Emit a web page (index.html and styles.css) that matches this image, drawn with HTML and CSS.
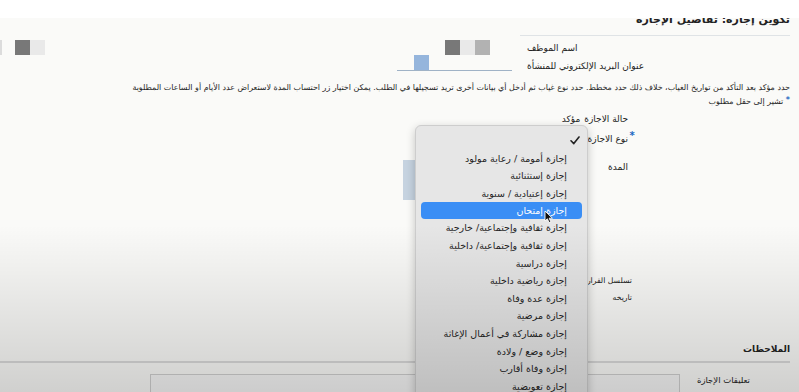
FILE: index.html
```html
<!DOCTYPE html>
<html lang="ar" dir="rtl">
<head>
    <meta charset="UTF-8">
    <meta name="viewport" content="width=device-width, initial-scale=1.0">
    <title>تكوين إجازة</title>
    <link rel="stylesheet" href="styles.css">
</head>
<body>
    <div class="header"></div>
    <div class="page">
        <div class="title-wrap">
            <h1 class="title">تكوين إجازة: تفاصيل الإجازة</h1>
        </div>
        <div class="title-rule"></div>

        <div class="info-row">
            <div class="info-labels">
                <div>اسم الموظف</div>
                <div>عنوان البريد الإلكتروني للمنشأة</div>
            </div>
            <div class="redact-mid">
                <div class="redact-top">
                    <span class="px dark"></span><span class="px light"></span><span class="px mid"></span>
                </div>
                <div class="redact-bottom">
                    <span class="px blue"></span>
                </div>
                <div class="redact-line"></div>
            </div>
            <div class="redact-left">
                <span class="px edge"></span><span class="gap"></span><span class="px dark"></span><span class="px light"></span>
            </div>
        </div>

        <p class="hint">حدد مؤكد بعد التأكد من تواريخ الغياب، خلاف ذلك حدد مخطط. حدد نوع غياب ثم أدخل أي بيانات أخرى تريد تسجيلها في الطلب. يمكن اختيار زر احتساب المدة لاستعراض عدد الأيام أو الساعات المطلوبة<br><span class="star">*</span> تشير إلى حقل مطلوب</p>

        <div class="form">
            <div class="row">
                <span class="req"></span>
                <span class="label">حالة الاجازة</span>
                <span class="value">مؤكد</span>
            </div>
            <div class="row">
                <span class="req">*</span>
                <span class="label">نوع الاجازة</span>
            </div>
            <div class="row row-duration">
                <span class="req"></span>
                <span class="label">المدة</span>
                <div class="field-stub"></div>
            </div>
            <div class="row row-short row-decision">
                <span class="req"></span>
                <span class="label">تسلسل القرار</span>
            </div>
            <div class="row row-short">
                <span class="req"></span>
                <span class="label">تاريخه</span>
            </div>
        </div>

        <h2 class="section">الملاحظات</h2>
        <div class="section-rule"></div>
        <div class="notes-row">
            <span class="notes-label">تعليقات الإجازة</span>
            <div class="textbox"></div>
        </div>
    </div>

    <div class="menu">
        <div class="menu-check">
            <svg width="10" height="9" viewBox="0 0 10 9"><path d="M1 4.8 L3.8 7.6 L9 1" fill="none" stroke="#222" stroke-width="1.6" stroke-linecap="round" stroke-linejoin="round"/></svg>
        </div>
        <div class="menu-item">إجازة أمومة / رعاية مولود</div>
        <div class="menu-item">إجازة إستثنائية</div>
        <div class="menu-item">إجازة إعتيادية / سنوية</div>
        <div class="menu-item active">إجازة إمتحان</div>
        <div class="menu-item">إجازة ثقافية وإجتماعية/ خارجية</div>
        <div class="menu-item">إجازة ثقافية وإجتماعية/ داخلية</div>
        <div class="menu-item">إجازة دراسية</div>
        <div class="menu-item">إجازة رياضية داخلية</div>
        <div class="menu-item">إجازة عدة وفاة</div>
        <div class="menu-item">إجازة مرضية</div>
        <div class="menu-item">إجازة مشاركة في أعمال الإغاثة</div>
        <div class="menu-item">إجازة وضع / ولادة</div>
        <div class="menu-item">إجازة وفاة أقارب</div>
        <div class="menu-item">إجازة تعويضية</div>
    </div>

    <svg class="cursor" width="10" height="14" viewBox="0 0 10 14">
        <path d="M1 1 L1 11 L3.4 8.8 L5 12.6 L6.8 11.8 L5.2 8.2 L8.4 8.2 Z" fill="#111" stroke="#fff" stroke-width="0.9" stroke-linejoin="round"/>
    </svg>

    <div class="shade"></div>
</body>
</html>
```

FILE: styles.css
```css
html, body {
    margin: 0;
    padding: 0;
}
body {
    width: 799px;
    height: 392px;
    overflow: hidden;
    position: relative;
    background: #fafaf8;
    font-family: "DejaVu Sans", sans-serif;
    color: #222;
    direction: rtl;
}
.header {
    height: 18px;
    background: #fff;
}
.page {
    padding-right: 9px;
}
.title-wrap {
    height: 11px;
    overflow: hidden;
}
.title {
    margin: -6px 0 0;
    font-size: 11px;
    line-height: 16px;
    font-weight: bold;
    color: #222;
}
.title-rule {
    width: 270px;
    height: 1px;
    margin-top: 6px;
    background: #dfe3e6;
}
.info-row {
    display: flex;
    gap: 8px;
    margin-top: 3px;
    height: 32px;
}
.info-labels {
    width: 270px;
    padding-left: 7px;
    box-sizing: border-box;
    text-align: left;
    font-size: 9px;
    line-height: 18px;
}
.redact-mid {
    width: 115px;
    direction: ltr;
}
.redact-top {
    padding-left: 48px;
    height: 15px;
    margin-top: 1px;
    display: flex;
}
.redact-bottom {
    padding-left: 17px;
    height: 15px;
    display: flex;
}
.redact-line {
    height: 1px;
    background: #9fb2c6;
}
.redact-left {
    margin-right: auto;
    direction: ltr;
    display: flex;
    height: 15px;
    margin-top: 1px;
}
.px {
    width: 15px;
    height: 15px;
    display: block;
}
.px.dark { background: #787878; }
.px.light { background: #e9e9e9; }
.px.mid { background: #b2b2b2; }
.px.blue { background: #95b5dc; }
.px.edge { width: 2px; background: #dcdcdc; }
.redact-left .gap { width: 13px; }
.hint {
    margin: 11px 0 0;
    font-size: 7.95px;
    line-height: 12px;
    color: #262626;
    white-space: nowrap;
}
.star {
    color: #1a66c2;
    font-weight: bold;
    vertical-align: 2px;
}
.form {
    padding-right: 154px;
    margin-top: 1px;
}
.row {
    display: flex;
    align-items: center;
    height: 20px;
    font-size: 9px;
}
.req {
    width: 8px;
    color: #1a66c2;
    font-weight: bold;
    font-size: 10px;
    align-self: flex-start;
    line-height: 14px;
    text-align: center;
}
.value {
    margin-right: 4px;
}
.row-duration {
    margin-top: 8px;
    height: 43px;
    align-items: flex-start;
    line-height: 20px;
}
.field-stub {
    width: 92px;
    height: 40px;
    margin-top: 3px;
    margin-right: 113px;
    background: #c6d3e0;
}
.row-short {
    height: 17px;
    font-size: 7.7px;
}
.row-short .req {
    width: 4px;
}
.row-decision {
    margin-top: 72px;
}
.section {
    margin: 35px 0 0;
    font-size: 9px;
    line-height: 16px;
    font-weight: bold;
    color: #222;
}
.section-rule {
    height: 2px;
    margin-top: 4px;
    background: #dadada;
}
.notes-row {
    display: flex;
    margin-top: 11px;
    padding-right: 40px;
}
.notes-label {
    width: 70px;
    font-size: 8.5px;
    line-height: 12px;
}
.textbox {
    width: 530px;
    height: 30px;
    border: 1px solid #cfcfcf;
    background: #f6f6f6;
    box-sizing: border-box;
}
.menu {
    position: absolute;
    left: 415px;
    top: 125px;
    width: 173px;
    height: 290px;
    box-sizing: border-box;
    padding-top: 6px;
    background: #e6e6e6;
    border: 1px solid #cdcdcd;
    border-radius: 6px;
    box-shadow: 0 3px 10px rgba(0, 0, 0, 0.22);
    direction: rtl;
}
.menu-check {
    height: 17.6px;
    padding-right: 7px;
    display: flex;
    align-items: center;
}
.menu-item {
    height: 17.6px;
    line-height: 17.6px;
    margin: 0 5px;
    padding-right: 15px;
    font-size: 9.5px;
    color: #1e1e1e;
    white-space: nowrap;
    border-radius: 4px;
}
.menu-item.active {
    height: 17px;
    line-height: 17px;
    background: #3a8ef5;
    color: #fff;
}
.cursor {
    position: absolute;
    left: 544px;
    top: 210px;
}
.shade {
    position: absolute;
    left: 0;
    top: 0;
    width: 100%;
    height: 100%;
    pointer-events: none;
    background: linear-gradient(to bottom, rgba(0, 0, 0, 0) 225px, rgba(0, 0, 0, 0.17) 392px);
}
```
